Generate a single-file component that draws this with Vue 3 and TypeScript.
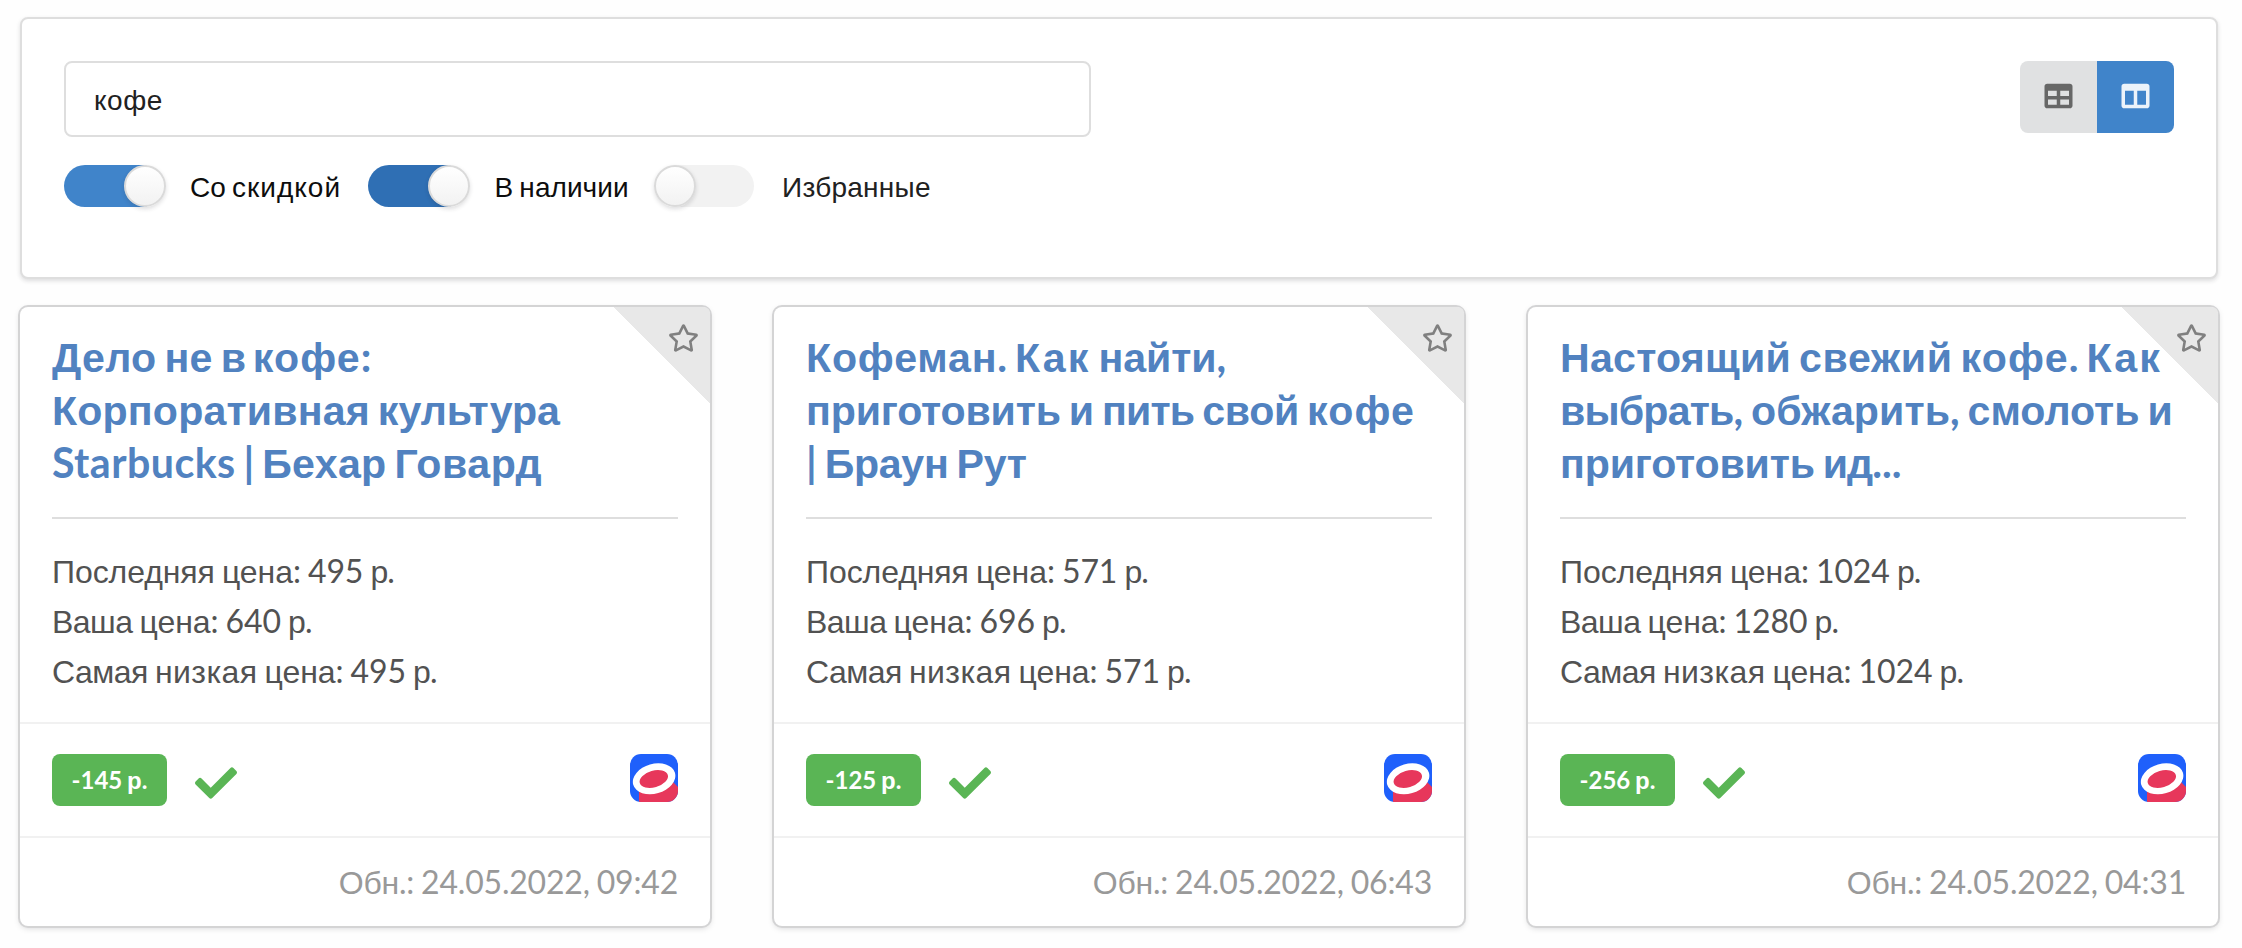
<script setup lang="ts">
import { ref } from 'vue'

interface Run {
  text: string
  cyrillic: boolean
}

interface Product {
  title: string[]
  last: number
  yours: number
  lowest: number
  updated: string
}

interface Toggle {
  label: string
  checked: boolean
  focused: boolean
}

const query = ref('кофе')

const toggles = ref<Toggle[]>([
  { label: 'Со скидкой', checked: true, focused: false },
  { label: 'В наличии', checked: true, focused: true },
  { label: 'Избранные', checked: false, focused: false },
])

const products: Product[] = [
  {
    title: ['Дело не в кофе:', 'Корпоративная культура', 'Starbucks | Бехар Говард'],
    last: 495, yours: 640, lowest: 495, updated: '24.05.2022, 09:42',
  },
  {
    title: ['Кофеман. Как найти,', 'приготовить и пить свой кофе', '| Браун Рут'],
    last: 571, yours: 696, lowest: 571, updated: '24.05.2022, 06:43',
  },
  {
    title: ['Настоящий свежий кофе. Как', 'выбрать, обжарить, смолоть и', 'приготовить ид...'],
    last: 1024, yours: 1280, lowest: 1024, updated: '24.05.2022, 04:31',
  },
]

// Cyrillic words are set in a different family from digits, Latin and punctuation.
function runs(text: string): Run[] {
  return (text.match(/[а-яё]+|[a-z]+|[^а-яёa-z]+/gi) ?? []).map((part) => ({
    text: part,
    cyrillic: /[а-яё]/i.test(part),
  }))
}

const tracking: Record<string, number> = {
  'Дело': 0.7, 'не': 0.7, 'в': -3, 'кофе': 2.8, 'Корпоративная': 0.4, 'Starbucks': 1.1, 'Бехар': 0.7, 'Говард': 1.4,
  'Кофеман': 2, 'Как': 5.2, 'найти': -0.2, 'приготовить': -0.4, 'пить': -2, 'свой': -0.7,
  'Браун': -0.7, 'Рут': -0.5, 'Настоящий': 0.6, 'свежий': 1.6, 'выбрать': -2, 'обжарить': 0.2, 'ид': -2.4,
  'Самая': -1.6, 'низкая': 1.3, 'Ваша': -1.7, 'р': -3,
  'скидкой': 3.6, 'наличии': 0.2, 'Избранные': 0.9,
}

function spacing(run: Run) {
  const value = tracking[run.text]
  return value ? { letterSpacing: `${value / 100}em` } : undefined
}

function prices(p: Product): string[] {
  return [
    `Последняя цена: ${p.last} р.`,
    `Ваша цена: ${p.yours} р.`,
    `Самая низкая цена: ${p.lowest} р.`,
  ]
}
</script>

<template>
  <main class="page">
    <section class="filters">
      <div class="search">
        <input v-model="query" class="query" type="text" />
        <div class="toggles">
          <div
            v-for="t in toggles"
            :key="t.label"
            class="toggle"
            :class="{ checked: t.checked, focused: t.focused }"
            @click="t.checked = !t.checked"
          >
            <span class="track"><span class="thumb"></span></span>
            <span class="toggle-label"><span v-for="(r, i) in runs(t.label)" :key="i" :class="{ cyr: r.cyrillic }" :style="spacing(r)">{{ r.text }}</span></span>
          </div>
        </div>
      </div>
      <div class="views">
        <button class="view" type="button" aria-label="table">
          <svg viewBox="0 0 512 512"><path fill-rule="evenodd" d="M464 32H48C21.5 32 0 53.5 0 80v352c0 26.5 21.5 48 48 48h416c26.5 0 48-21.5 48-48V80c0-26.5-21.5-48-48-48zM224 416H64v-96h160v96zm0-160H64v-96h160v96zm224 160H288v-96h160v96zm0-160H288v-96h160v96z" /></svg>
        </button>
        <button class="view active" type="button" aria-label="columns">
          <svg viewBox="0 0 512 512"><path fill-rule="evenodd" d="M464 32H48C21.5 32 0 53.5 0 80v352c0 26.5 21.5 48 48 48h416c26.5 0 48-21.5 48-48V80c0-26.5-21.5-48-48-48zM224 416H64V160h160v256zm224 0H288V160h160v256z" /></svg>
        </button>
      </div>
    </section>

    <section class="cards">
      <article v-for="p in products" :key="p.updated" class="card">
        <div class="corner">
          <svg class="star" viewBox="0 0 576 512"><path d="M528.1 171.5L382 150.2 316.7 17.8c-11.7-23.6-45.6-23.9-57.4 0L194 150.2 47.9 171.5c-26.2 3.8-36.7 36.1-17.7 54.6l105.7 103-25 145.5c-4.5 26.3 23.2 46 46.4 33.7L288 439.6l130.7 68.7c23.2 12.2 50.9-7.4 46.4-33.7l-25-145.5 105.7-103c19-18.5 8.5-50.8-17.7-54.6zM388.6 312.3l23.7 138.4L288 385.4l-124.3 65.3 23.7-138.4-100.6-98 139-20.2 62.2-126 62.2 126 139 20.2-100.6 98z" /></svg>
        </div>
        <div class="body">
          <h2 class="title">
            <span v-for="line in p.title" :key="line" class="line"><span v-for="(r, i) in runs(line)" :key="i" :class="{ cyr: r.cyrillic }" :style="spacing(r)">{{ r.text }}</span></span>
          </h2>
          <div class="prices">
            <div v-for="line in prices(p)" :key="line" class="line"><span v-for="(r, i) in runs(line)" :key="i" :class="{ cyr: r.cyrillic }" :style="spacing(r)">{{ r.text }}</span></div>
          </div>
        </div>
        <div class="status">
          <span class="discount">{{ p.last - p.yours }} <span class="cyr">р</span>.</span>
          <svg class="check" viewBox="0 0 512 512"><path d="M173.898 439.404l-166.4-166.4c-9.997-9.997-9.997-26.206 0-36.204l36.203-36.204c9.997-9.998 26.207-9.998 36.204 0L192 312.69 432.095 72.596c9.997-9.997 26.207-9.997 36.204 0l36.203 36.204c9.997 9.997 9.997 26.206 0 36.204l-294.4 294.401c-9.998 9.997-26.207 9.997-36.204-.001z" /></svg>
          <svg class="shop" viewBox="0 0 48 48">
            <rect width="48" height="48" fill="#1f60fb" />
            <path d="M9 30L43 28L48 33V48H9Z" fill="#e7375b" />
            <ellipse cx="24.1" cy="24.8" rx="21.7" ry="14.9" transform="rotate(-16 24.1 24.8)" fill="#fff" />
            <ellipse cx="23.8" cy="25" rx="14.6" ry="8.3" transform="rotate(-16 23.8 25)" fill="#e7375b" />
          </svg>
        </div>
        <div class="updated"><span v-for="(r, i) in runs('Обн.: ' + p.updated)" :key="i" :class="{ cyr: r.cyrillic }" :style="spacing(r)">{{ r.text }}</span></div>
      </article>
    </section>
  </main>
</template>

<style>
body {
  background: #fefefe;
}
</style>

<style scoped>
.page {
  box-sizing: border-box;
  width: 2242px;
  height: 948px;
  padding: 17px 24px 0 20px;
  font-family: Lato, "Liberation Sans", sans-serif;
  word-spacing: -0.063em;
  overflow: hidden;
}

.cyr {
  font-family: "Liberation Sans", Arial, sans-serif;
  line-height: 0;
}

.filters {
  box-sizing: border-box;
  display: flex;
  justify-content: space-between;
  align-items: flex-start;
  height: 262px;
  padding: 42px;
  border: 2px solid #dedede;
  border-radius: 8px;
  background: #fff;
  box-shadow: 0 2px 4px rgba(34, 36, 38, 0.15);
}

.query {
  box-sizing: border-box;
  display: block;
  width: 1027px;
  height: 76px;
  padding: 4px 28px 0;
  border: 2px solid #dedede;
  border-radius: 8px;
  outline: none;
  background: #fff;
  color: #212121;
  font: 28px "Liberation Sans", Arial, sans-serif;
  letter-spacing: 0.018em;
}

.toggles {
  display: flex;
  margin-top: 28px;
}

.toggle {
  display: flex;
  align-items: center;
  height: 42px;
  color: #0d0d0d;
  font-size: 28px;
}

.toggle:nth-child(1) {
  width: 304px;
}

.toggle:nth-child(2) {
  width: 288px;
}

.toggle:nth-child(3) {
  color: #212121;
}

.track {
  position: relative;
  flex: none;
  width: 98px;
  height: 42px;
  border-radius: 21px;
  background: #f2f2f2;
}

.thumb {
  position: absolute;
  top: 0;
  left: -2px;
  box-sizing: border-box;
  width: 42px;
  height: 42px;
  border: 2px solid #dadada;
  border-radius: 50%;
  background: linear-gradient(#fff, #f2f2f2);
  box-shadow: 0 2px 4px rgba(34, 36, 38, 0.15);
}

.checked .track {
  background: #4084ca;
}

.checked.focused .track {
  background: #2f6fb4;
}

.checked .thumb {
  left: 60.3px;
}

.toggle-label {
  margin-left: 28px;
  line-height: 42px;
  white-space: nowrap;
}

.toggle:nth-child(2) .toggle-label {
  margin-left: 28.5px;
}

.views {
  display: flex;
  overflow: hidden;
  border-radius: 8px;
}

.view {
  box-sizing: border-box;
  display: flex;
  align-items: center;
  justify-content: center;
  width: 77px;
  height: 72px;
  padding: 0 0 2px;
  border: 0;
  background: #e0e1e2;
  fill: #676767;
}

.view.active {
  background: #4084ca;
  fill: #ecf3fa;
}

.view svg {
  width: 29px;
  height: 28px;
}

.cards {
  display: grid;
  grid-template-columns: repeat(3, 690px);
  column-gap: 64px;
  margin-top: 28px;
}

.card {
  position: relative;
  display: flex;
  flex-direction: column;
  height: 619px;
  border-radius: 8px;
  background: #fff;
  box-shadow: 0 2px 6px 0 #d4d4d5, 0 0 0 2px #d4d4d5;
}

.corner {
  position: absolute;
  top: 0;
  right: 0;
  width: 96px;
  height: 96px;
  border-top-right-radius: 6px;
  background: linear-gradient(to top right, transparent 50%, #e8e8e8 50%);
}

.star {
  position: absolute;
  top: 16.5px;
  right: 11px;
  width: 31px;
  height: 28px;
  fill: #808080;
}

.body {
  position: relative;
  box-sizing: border-box;
  height: 415px;
  padding: 23px 32px 0;
}

.line {
  display: block;
  white-space: nowrap;
}

.title {
  margin: 0;
  padding-bottom: 28px;
  border-bottom: 2px solid #dedede;
  color: #5182c0;
  font-size: 41.14px;
  font-weight: 700;
  line-height: 53px;
  word-spacing: -0.05em;
}

.prices {
  padding-top: 27px;
  color: #525252;
  font-size: 32px;
  line-height: 50px;
  letter-spacing: -0.08px;
}

.status {
  display: flex;
  align-items: flex-start;
  box-sizing: border-box;
  height: 116px;
  padding: 30px 32px;
  border-top: 2px solid #f1f1f1;
  border-bottom: 2px solid #f1f1f1;
}

.discount {
  box-sizing: border-box;
  width: 115px;
  height: 52px;
  border-radius: 8px;
  background: #5ab555;
  color: #fff;
  font-size: 24px;
  font-weight: 700;
  line-height: 52px;
  text-align: center;
  white-space: nowrap;
}

.check {
  width: 42px;
  height: 42px;
  margin: 8px 0 0 28px;
  fill: #5ab555;
}

.shop {
  width: 48px;
  height: 48px;
  margin-left: auto;
  border-radius: 11px;
}

.updated {
  padding: 19px 32px 0;
  color: #999;
  font-size: 32px;
  line-height: 50px;
  letter-spacing: -0.2px;
  text-align: right;
}
</style>
